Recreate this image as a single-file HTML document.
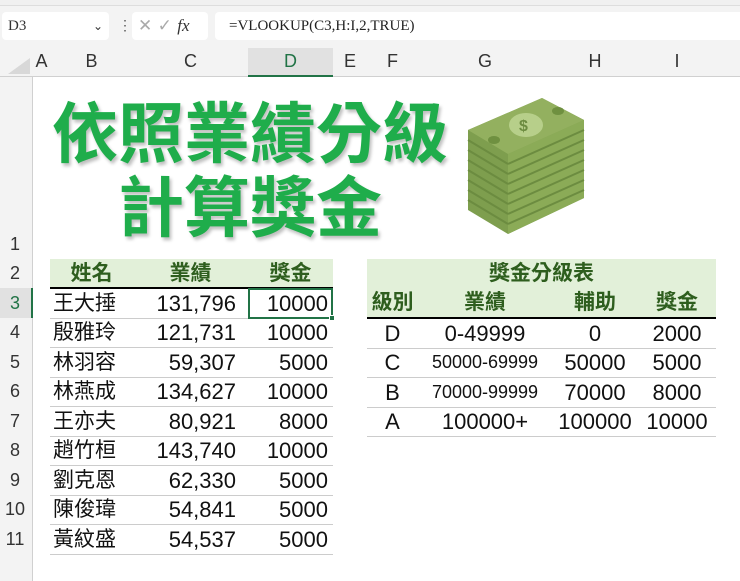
<!DOCTYPE html>
<html><head><meta charset="utf-8"><style>
*{margin:0;padding:0;box-sizing:border-box}
body{width:740px;height:581px;background:#fff;position:relative;overflow:hidden;font-family:"Liberation Sans","Noto Sans CJK TC",sans-serif;color:#111}
.a{position:absolute}
.t{position:absolute;font-size:21px;line-height:29px;white-space:nowrap}
.hd{color:#2e5e1e;font-weight:bold}
</style></head><body>
<div class="a" style="left:0;top:0;width:740px;height:6px;background:#f0f0f0;border-bottom:1px solid #ddd"></div>
<div class="a" style="left:0;top:6px;width:740px;height:42px;background:#f3f3f3"></div>
<div class="a" style="left:2px;top:12px;width:107px;height:28px;background:#fff;border-radius:4px;font:15px 'Liberation Serif',serif;line-height:28px;padding-left:6px;color:#333">D3<span style="position:absolute;right:6px;font-size:12px;font-family:'DejaVu Sans'">⌄</span></div>
<div class="a" style="left:118px;top:17px;font-size:14px;color:#555">⋮</div>
<div class="a" style="left:132px;top:12px;width:76px;height:28px;background:#fff;border-radius:4px;font-size:17px;line-height:28px;color:#aaa;padding-left:6px;font-family:'DejaVu Sans'">✕ ✓ <i style="color:#333;font-family:'Liberation Serif';font-size:17px">fx</i></div>
<div class="a" style="left:215px;top:12px;width:525px;height:28px;background:#fff;border-radius:4px 0 0 4px;font:15px 'Liberation Serif',serif;line-height:28px;padding-left:14px;color:#222">=VLOOKUP(C3,H:I,2,TRUE)</div>
<div class="a" style="left:0;top:48px;width:740px;height:29px;background:#f3f3f3;border-bottom:1px solid #d0d0d0"></div>
<div class="a" style="left:248px;top:48px;width:85px;height:29px;background:#e1e1e1;border-bottom:2px solid #217346"></div>
<div class="a" style="left:8px;top:58px;width:0;height:0;border-left:22px solid transparent;border-bottom:16px solid #d8d8d8"></div>
<div class="t" style="top:47px;left:33px;width:17px;text-align:center;font-size:18px;color:#333">A</div>
<div class="t" style="top:47px;left:50px;width:83px;text-align:center;font-size:18px;color:#333">B</div>
<div class="t" style="top:47px;left:133px;width:115px;text-align:center;font-size:18px;color:#333">C</div>
<div class="t" style="top:47px;left:248px;width:85px;text-align:center;font-size:18px;color:#217346">D</div>
<div class="t" style="top:47px;left:333px;width:34px;text-align:center;font-size:18px;color:#333">E</div>
<div class="t" style="top:47px;left:367px;width:51px;text-align:center;font-size:18px;color:#333">F</div>
<div class="t" style="top:47px;left:418px;width:134px;text-align:center;font-size:18px;color:#333">G</div>
<div class="t" style="top:47px;left:552px;width:86px;text-align:center;font-size:18px;color:#333">H</div>
<div class="t" style="top:47px;left:638px;width:78px;text-align:center;font-size:18px;color:#333">I</div>
<div class="a" style="left:0;top:77px;width:33px;height:504px;background:#f3f3f3;border-right:1px solid #d0d0d0"></div>
<div class="a" style="left:0;top:288px;width:33px;height:30px;background:#e1e1e1;border-right:2px solid #217346"></div>
<div style="position:absolute;left:0;top:230px;width:30px;font-size:18px;color:#333;line-height:29px;text-align:center">1</div>
<div style="position:absolute;left:0;top:259px;width:30px;font-size:18px;color:#333;line-height:29.5px;text-align:center">2<br><span style="color:#217346">3</span><br>4<br>5<br>6<br>7<br>8<br>9<br>10<br>11</div>
<div class="a" style="left:52px;top:96px;font-size:66px;font-weight:bold;color:#1fad4b;line-height:76px;text-shadow:2px 3px 3px rgba(0,0,0,.25);white-space:nowrap">依照業績分級</div>
<div class="a" style="left:118px;top:170px;font-size:66px;font-weight:bold;color:#1fad4b;line-height:76px;text-shadow:2px 3px 3px rgba(0,0,0,.25);white-space:nowrap">計算獎金</div>
<svg class="a" style="left:464px;top:94px" width="122" height="142" viewBox="0 0 122 142">
<polygon points="4,36 78,4 120,26 120,104 44,140 4,116" fill="#7e9e4e"/>
<polygon points="44,60 120,26 120,104 44,140" fill="#8bab57"/>
<g stroke="#6c8c40" stroke-width="2">
<line x1="4" y1="46" x2="44" y2="70"/><line x1="4" y1="56" x2="44" y2="80"/><line x1="4" y1="66" x2="44" y2="90"/><line x1="4" y1="76" x2="44" y2="100"/><line x1="4" y1="86" x2="44" y2="110"/><line x1="4" y1="96" x2="44" y2="120"/><line x1="4" y1="106" x2="44" y2="130"/>
<line x1="44" y1="70" x2="120" y2="36"/><line x1="44" y1="80" x2="120" y2="46"/><line x1="44" y1="90" x2="120" y2="56"/><line x1="44" y1="100" x2="120" y2="66"/><line x1="44" y1="110" x2="120" y2="76"/><line x1="44" y1="120" x2="120" y2="86"/><line x1="44" y1="130" x2="120" y2="96"/>
</g>
<polygon points="4,36 78,4 120,26 44,60" fill="#93b05f"/>
<ellipse cx="62" cy="31" rx="17" ry="12" fill="#b7cf8a"/>
<text x="55" y="37" font-size="16" font-weight="bold" fill="#6c8c40" font-family="Liberation Sans">$</text>
<ellipse cx="30" cy="46" rx="6" ry="4" fill="#6f9040"/><ellipse cx="94" cy="17" rx="6" ry="4" fill="#6f9040"/>
</svg>
<div class="a" style="left:50px;top:259px;width:283px;height:29px;background:#e2f0d9"></div>
<div class="a" style="left:50px;top:287px;width:283px;height:2px;background:#000"></div>
<div id="lt"></div>
<div class="a" style="left:248px;top:288px;width:85px;height:31px;border:2px solid #217346"></div>
<div class="a" style="left:329px;top:315px;width:6px;height:6px;background:#217346;border:1px solid #fff"></div>
<div class="a" style="left:367px;top:259px;width:349px;height:59px;background:#e2f0d9"></div>
<div class="a" style="left:367px;top:317px;width:349px;height:2px;background:#000"></div>
<div class="t hd" style="left:367px;top:259px;width:349px;text-align:center">獎金分級表</div>
<div class="t hd" style="left:367px;top:288px;width:51px;text-align:center">級別</div>
<div class="t hd" style="left:418px;top:288px;width:134px;text-align:center">業績</div>
<div class="t hd" style="left:552px;top:288px;width:86px;text-align:center">輔助</div>
<div class="t hd" style="left:638px;top:288px;width:78px;text-align:center">獎金</div>
<div id="rt"></div>
<script>
var L=[["王大捶","131,796","10000"],["殷雅玲","121,731","10000"],["林羽容","59,307","5000"],["林燕成","134,627","10000"],["王亦夫","80,921","8000"],["趙竹桓","143,740","10000"],["劉克恩","62,330","5000"],["陳俊瑋","54,841","5000"],["黃紋盛","54,537","5000"]];
var h='<div class="t hd" style="left:50px;top:259px;width:83px;text-align:center">姓名</div><div class="t hd" style="left:133px;top:259px;width:115px;text-align:center">業績</div><div class="t hd" style="left:248px;top:259px;width:85px;text-align:center">獎金</div>';
L.forEach(function(r,i){var y=288.5+i*29.5;
h+='<div class="t" style="left:53px;top:'+y+'px">'+r[0]+'</div><div class="t" style="left:133px;top:'+y+'px;width:103px;text-align:right;font-size:22px">'+r[1]+'</div><div class="t" style="left:248px;top:'+y+'px;width:80px;text-align:right;font-size:22px">'+r[2]+'</div><div class="a" style="left:50px;top:'+(y+29)+'px;width:283px;height:1px;background:#ccc"></div>';});
document.getElementById('lt').innerHTML=h;
var R=[["D","0-49999","0","2000",22],["C","50000-69999","50000","5000",18],["B","70000-99999","70000","8000",18],["A","100000+","100000","10000",22]];
h='';R.forEach(function(r,i){var y=318.5+i*29.5;
h+='<div class="t" style="left:367px;top:'+y+'px;width:51px;text-align:center;font-size:22px">'+r[0]+'</div><div class="t" style="left:418px;top:'+y+'px;width:134px;text-align:center;font-size:'+r[4]+'px">'+r[1]+'</div><div class="t" style="left:552px;top:'+y+'px;width:86px;text-align:center;font-size:22px">'+r[2]+'</div><div class="t" style="left:638px;top:'+y+'px;width:78px;text-align:center;font-size:22px">'+r[3]+'</div><div class="a" style="left:367px;top:'+(y+29)+'px;width:349px;height:1px;background:#ccc"></div>';});
document.getElementById('rt').innerHTML=h;
</script>
</body></html>
